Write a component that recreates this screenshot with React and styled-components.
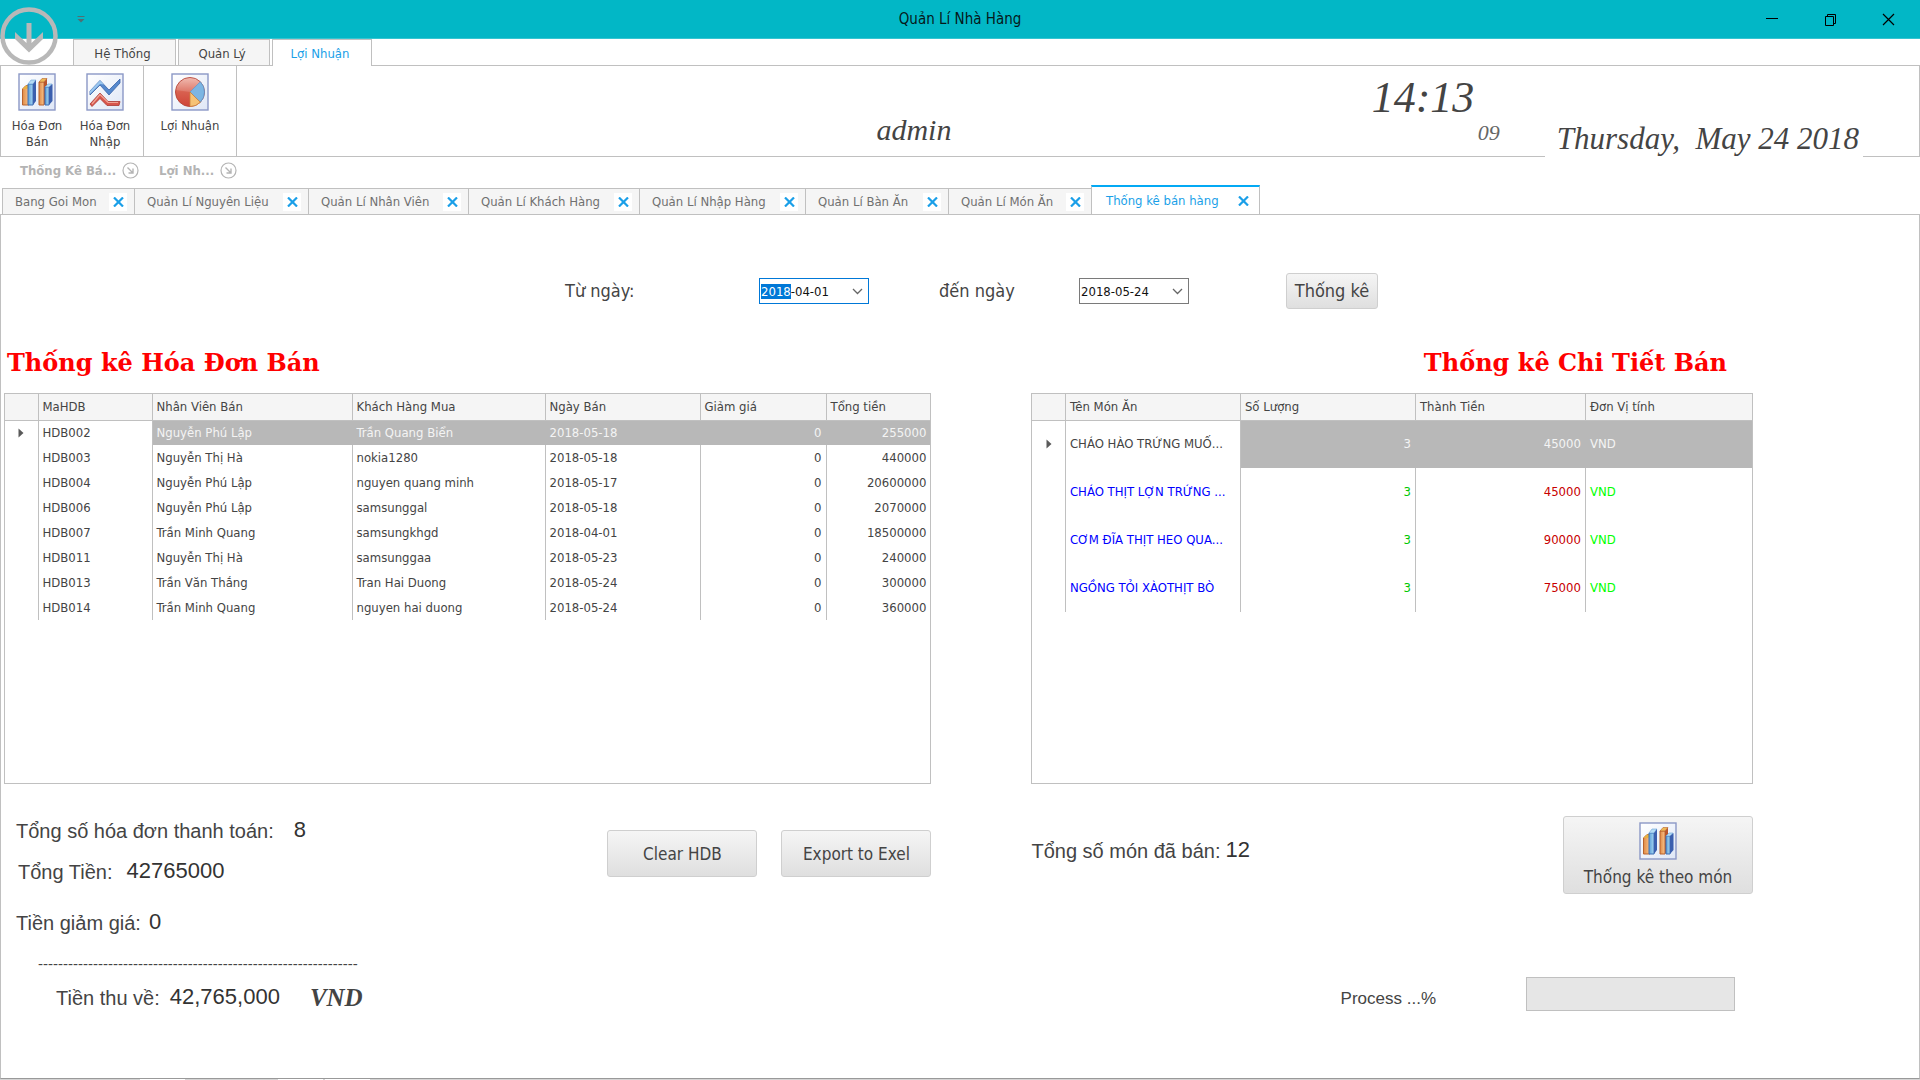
import React, { useEffect, useRef, useState } from "react";
import styled, { createGlobalStyle, css } from "styled-components";

const line = "#c0c0c0";
const ink = "#444444";
const blue = "#1a9fe8";
const ui = `"DejaVu Sans Condensed", "DejaVu Sans", sans-serif`;
const arial = `"Liberation Sans", Arial, sans-serif`;
const script = `"Liberation Serif", "Times New Roman", serif`;

const Global = createGlobalStyle`
  *, *::before, *::after { box-sizing: border-box; }
  body { margin: 0; background: #fff; color: ${ink}; font-family: ${ui}; font-size: 13px; line-height: 16px; }
  button, input { font: inherit; color: inherit; }
  button { cursor: pointer; padding: 0; }
  h2, p, dl, dt, dd { margin: 0; }
`;

const Window = styled.div`
  position: relative;
  display: flex;
  flex-direction: column;
  min-height: 100vh;
`;

/* ---------- title bar ---------- */
const TitleBar = styled.header`
  display: grid;
  grid-template-columns: 1fr auto 1fr;
  align-items: center;
  height: 39px;
  background: #02b7c6;
  color: #0b2a2e;
  border-bottom: 1px solid #35c5d1;
`;
const QuickAccess = styled.button`
  width: 16px;
  height: 16px;
  margin-left: 73px;
  border: 0;
  background: none;
  display: grid;
  place-items: center;
`;
const Title = styled.span`
  font-size: 15px;
  line-height: 20px;
  color: #06181a;
`;
const Controls = styled.div`
  display: flex;
  justify-content: flex-end;
  padding-right: 3px;
`;
const ControlButton = styled.button`
  width: 58px;
  height: 36px;
  border: 0;
  background: none;
  display: grid;
  place-items: center;
`;
const AppButton = styled.button`
  position: absolute;
  left: 0;
  top: 7px;
  width: 58px;
  height: 58px;
  border: 0;
  background: none;
`;

/* ---------- ribbon ---------- */
const RibbonTabs = styled.nav`
  display: flex;
  gap: 2px;
  height: 26px;
  padding-left: 73px;
`;
const RibbonTab = styled.button`
  width: ${(p) => p.$w}px;
  height: 26px;
  padding: 2px 4px 0 0;
  border: 1px solid ${line};
  border-bottom: 0;
  background: ${(p) => (p.$active ? "#fff" : "#f5f5f5")};
  color: ${(p) => (p.$active ? blue : ink)};
  ${(p) => p.$active && css`height: 27px; z-index: 1;`}
`;
const Ribbon = styled.section`
  display: flex;
  height: 92px;
  border: 1px solid ${line};
`;
const RibbonGroup = styled.div`
  display: flex;
  width: ${(p) => p.$w}px;
  padding: 7px 7px 0 7px;
  gap: 10px;
  border-right: 1px solid ${line};
  justify-content: ${(p) => (p.$center ? "center" : "flex-start")};
`;
const RibbonButton = styled.button`
  display: flex;
  flex-direction: column;
  align-items: center;
  align-self: flex-start;
  gap: 7px;
  width: ${(p) => p.$w || 58}px;
  border: 0;
  background: none;
  line-height: 16px;
  white-space: pre;
`;
const Info = styled.div`
  flex: 1;
  display: grid;
  grid-template-columns: 639fr 495fr 173fr 374fr;
  font-family: ${script};
  font-style: italic;
`;
const User = styled.p`
  grid-column: 2;
  padding-top: 47px;
  font-size: 30px;
  line-height: 34px;
`;
const Clock = styled.p`
  display: flex;
  flex-direction: column;
  width: 128px;
  padding-top: 10px;
  font-size: 44px;
  line-height: 44px;
`;
const Seconds = styled.span`
  align-self: flex-end;
  font-size: 22px;
  line-height: 26px;
  color: #666;
`;
const Today = styled.p`
  justify-self: start;
  align-self: end;
  padding: 0 4px 10px 12px;
  margin-bottom: -10px;
  background: #fff;
  font-size: 31px;
  line-height: 34px;
  white-space: pre;
`;
const Captions = styled.div`
  display: flex;
  align-items: center;
  height: 27px;
  padding-left: 20px;
  gap: 20px;
  color: #b4b4b4;
  font-weight: bold;
`;
const Caption = styled.div`
  display: flex;
  align-items: center;
  gap: 6px;
`;
const Launcher = styled.button`
  width: 17px;
  height: 17px;
  border: 0;
  background: none;
`;

/* ---------- document tabs ---------- */
const DocTabs = styled.nav`
  display: flex;
  align-items: flex-end;
  height: 31px;
  padding-left: 2px;
  margin-bottom: -1px;
`;
const DocTab = styled.div`
  display: flex;
  align-items: center;
  justify-content: space-between;
  width: ${(p) => p.$w}px;
  height: 27px;
  padding: 0 7px 0 12px;
  border: 1px solid ${line};
  border-right-width: 0;
  background: #f5f5f5;
  color: #707070;
  ${(p) =>
    p.$active &&
    css`
      height: 30px;
      border-top: 2px solid #03a9f4;
      border-right-width: 1px;
      border-bottom: 0;
      background: #fff;
      color: ${blue};
      padding-left: 14px;
    `}
`;
const DocLink = styled.button`
  border: 0;
  background: none;
`;
const DocClose = styled.button`
  width: 18px;
  height: 18px;
  border: 0;
  background: #fff;
  display: grid;
  place-items: center;
`;

/* ---------- page ---------- */
const Page = styled.main`
  flex: 1;
  border: 1px solid ${line};
  border-bottom-color: #999;
  padding: 58px 166px 0 3px;
`;
const Filter = styled.form`
  display: flex;
  align-items: center;
  height: 36px;
  padding-left: 561px;
  font-size: 18px;
`;
const FilterLabel = styled.label`
  width: ${(p) => p.$w}px;
`;
const DateBox = styled.div`
  display: flex;
  align-items: center;
  width: 110px;
  height: 26px;
  margin-right: ${(p) => p.$after}px;
  padding: 0 4px 0 1px;
  border: 1px solid ${(p) => (p.$focus ? "#0078d7" : "#7a7a7a")};
  font-size: 13px;
  color: #111;
`;
const DateInput = styled.input`
  flex: 1;
  min-width: 0;
  height: 18px;
  padding: 0;
  border: 0;
  outline: 0;
  background: none;
  caret-color: transparent;
  &::selection { background: #0078d7; color: #fff; }
`;
const DateDrop = styled.button`
  width: 14px;
  height: 20px;
  border: 0;
  background: none;
`;
const Button = styled.button`
  display: flex;
  flex-direction: column;
  align-items: center;
  justify-content: center;
  gap: 6px;
  width: ${(p) => p.$w}px;
  height: ${(p) => p.$h}px;
  border: 1px solid #cfcfcf;
  border-radius: 3px;
  background: linear-gradient(#f5f5f5, #dfdfdf);
  font-size: ${(p) => p.$size || 17}px;
  line-height: 22px;
`;

const Columns = styled.div`
  display: grid;
  grid-template-columns: 928fr 722fr;
  column-gap: 100px;
  margin-top: 33px;
`;
const Heading = styled.h2`
  height: 51px;
  padding: 4px 26px 0 3px;
  color: #ff0000;
  font: bold 24px/34px "DejaVu Serif", serif;
  text-align: ${(p) => p.$align || "left"};
  white-space: nowrap;
`;
const GridBox = styled.div`
  height: 391px;
  border: 1px solid ${line};
`;
const Table = styled.table`
  width: 100%;
  table-layout: fixed;
  border-collapse: collapse;
`;
const Col = styled.col`
  width: ${(p) => (p.$w ? p.$w + "px" : "auto")};
`;
const Th = styled.th`
  height: 26px;
  padding: 0 4px;
  text-align: left;
  font-weight: normal;
  background: #f5f5f5;
  border-right: 1px solid ${line};
  border-bottom: 1px solid ${line};
  &:last-child { border-right: 0; }
`;
const Td = styled.td`
  height: ${(p) => p.$h}px;
  padding: 0 4px;
  text-align: ${(p) => (p.$right ? "right" : "left")};
  color: ${(p) => p.$color || ink};
  border-right: 1px solid ${line};
  overflow: hidden;
  text-overflow: ellipsis;
  white-space: nowrap;
  &:last-child { border-right: 0; }
  ${(p) =>
    p.$selected &&
    css`
      background: #b8b8b8;
      border-right-color: #b8b8b8;
      color: #f4f4f4;
    `}
`;
const Mark = styled.td`
  text-align: center;
  padding: 0;
  line-height: 0;
  border-right: 1px solid ${line};
`;

const Footer = styled.section`
  display: flex;
  justify-content: space-between;
  align-items: flex-start;
  padding-top: 32px;
`;
const Totals = styled.dl`
  font-family: ${arial};
`;
const Total = styled.div`
  display: flex;
  align-items: flex-start;
  height: ${(p) => p.$h}px;
  padding-left: ${(p) => p.$indent}px;
  gap: ${(p) => p.$gap}px;
`;
const TotalLabel = styled.dt`
  font-size: 20px;
  line-height: 30px;
`;
const TotalValue = styled.dd`
  font-size: 22px;
  line-height: 28px;
  color: #333;
`;
const Currency = styled.dd`
  padding-left: 20px;
  font: italic bold 25px/30px ${script};
`;
const Dashes = styled.div`
  height: 27px;
  padding-left: 34px;
  font-size: 15px;
  line-height: 16px;
`;
const Actions = styled.div`
  display: flex;
  gap: 24px;
  padding-top: 14px;
`;
const Sold = styled.dl`
  padding-top: 20px;
  font-family: ${arial};
`;
const Progress = styled.div`
  display: flex;
  justify-content: flex-end;
  align-items: flex-start;
  padding: 83px 18px 0 0;
  font: 17px/40px ${arial};
`;
const ProgressLabel = styled.label`
  padding-right: 90px;
  padding-top: 2px;
`;
const Bar = styled.progress`
  appearance: none;
  width: 209px;
  height: 34px;
  border: 1px solid ${line};
  background: #e6e6e6;
  &::-webkit-progress-bar { background: #e6e6e6; }
  &::-webkit-progress-value { background: #02b7c6; }
`;
const StatusEdge = styled.footer`
  display: flex;
  gap: 2px;
  height: 1px;
  padding-left: 140px;
  background: #d4d4d4;
`;
const StatusCell = styled.span`
  width: 45px;
  margin-right: ${(p) => p.$after || 0}px;
  background: #fff;
`;

/* ---------- drawings ---------- */
const Frame = ({ id, children }) => (
  <svg width="38" height="38" viewBox="0 0 38 38" aria-hidden="true">
    <defs>
      <linearGradient id={id + "bg"} x1="0" y1="0" x2="1" y2="1">
        <stop offset="0" stopColor="#fff" />
        <stop offset="1" stopColor="#dfe7f6" />
      </linearGradient>
      <linearGradient id={id + "o"}>
        <stop offset="0" stopColor="#e08a45" />
        <stop offset="1" stopColor="#f9c48c" />
      </linearGradient>
      <linearGradient id={id + "b"}>
        <stop offset="0" stopColor="#5a9fd8" />
        <stop offset="1" stopColor="#a9d6f2" />
      </linearGradient>
    </defs>
    <rect x="1" y="1" width="36" height="36" fill={`url(#${id}bg)`} stroke="#8b98c6" strokeWidth="1.4" />
    {children}
  </svg>
);
const BarsIcon = ({ id }) => (
  <Frame id={id}>
    <path d="M4.500 16L8 12.500H11V32H4.500Z" fill={`url(#${id}o)`} stroke="#b9632c" />
    <path d="M4.500 16L8 12.500H12L9 16Z" fill="#e9b13f" />
    <path d="M10 11H15V32H10Z" fill={`url(#${id}b)`} stroke="#3d6fb4" />
    <path d="M10 11L13 7H18L15 11Z" fill="#b5dcf5" stroke="#6aa2d6" strokeWidth=".6" />
    <path d="M15 11L18 7V28L15 32Z" fill="#3b5fae" />
    <path d="M21 9H26V32H21Z" fill={`url(#${id}o)`} stroke="#b9632c" />
    <path d="M21 9L24 5.500H29L26 9Z" fill="#ecb956" stroke="#b9632c" strokeWidth=".6" />
    <path d="M26 9L29 5.500V28L26 32Z" fill="#b9562c" />
    <path d="M27 14H31V32H27Z" fill={`url(#${id}b)`} stroke="#3d6fb4" />
    <path d="M27 14L30 11H34L31 14Z" fill="#b5dcf5" stroke="#6aa2d6" strokeWidth=".6" />
    <path d="M31 14L34.500 11V28L31 32Z" fill="#3b5fae" />
  </Frame>
);
const LinesIcon = () => (
  <Frame id="ln">
    <path d="M4 18L14 7.500L23 17L34 6V10L23 22L14 12L4 22Z" fill="#5589cd" stroke="#3a62a8" strokeWidth=".8" />
    <path d="M4 18L14 7.500L18 11.500L14 11L4 21Z" fill="#9ac6ee" />
    <path d="M4 31L14 20L22 28.500H34L33 32.500H21L14 25.500L6 33.500Z" fill="#d8564c" stroke="#a93834" strokeWidth=".8" />
    <path d="M6 31L14 21.500L22 29.500H32" fill="none" stroke="#f0a394" strokeWidth="1.200" />
  </Frame>
);
const PieIcon = () => (
  <Frame id="pi">
    <defs>
      <linearGradient id="pieRed" x1="0" y1="0" x2="0" y2="1">
        <stop offset="0" stopColor="#eeb0a4" />
        <stop offset=".5" stopColor="#d8604f" />
        <stop offset="1" stopColor="#cf4438" />
      </linearGradient>
    </defs>
    <circle cx="19" cy="19" r="14.500" fill="url(#pieRed)" stroke="#b9483c" />
    <path d="M19 19L29.300 8.800A14.500 14.500 0 0 1 29.300 29.200Z" fill="#7cb5e2" stroke="#5d92c8" strokeWidth=".8" />
    <path d="M19 19L29.300 29.200A14.500 14.500 0 0 1 19 33.500Z" fill="#f6c275" stroke="#c9803c" strokeWidth=".8" />
    <path d="M19 4.500A14.500 14.500 0 0 1 29.300 8.800L19 19L5 17A14.500 14.500 0 0 1 19 4.500Z" fill="#fff" opacity=".14" />
  </Frame>
);
const Cross = () => (
  <svg width="11" height="10" viewBox="0 0 11 10" aria-hidden="true">
    <path d="M1 0.500L10 9.500M10 0.500L1 9.500" stroke={blue} strokeWidth="2.200" />
  </svg>
);
const LaunchIcon = () => (
  <svg width="17" height="17" viewBox="0 0 17 17" fill="none" stroke="#b4b4b4" aria-hidden="true">
    <circle cx="8.500" cy="8.500" r="7.500" strokeWidth="1.200" />
    <path d="M5.500 5.500L11 11M11 6.500V11H6.500" strokeWidth="1.400" />
  </svg>
);
const Arrow = () => (
  <svg width="6" height="10" viewBox="0 0 6 10" aria-hidden="true">
    <path d="M0.500 0.500L5.500 5L0.500 9.500Z" fill="#5a5a5a" />
  </svg>
);
const Chevron = () => (
  <svg width="11" height="7" viewBox="0 0 11 7" aria-hidden="true">
    <path d="M1 1L5.500 5.500L10 1" fill="none" stroke="#666" strokeWidth="1.300" />
  </svg>
);

/* ---------- data ---------- */
const docTabs = [
  ["Bang Goi Mon", 132],
  ["Quản Lí Nguyên Liệu", 174],
  ["Quản Lí Nhân Viên", 160],
  ["Quản Lí Khách Hàng", 171],
  ["Quản Lí Nhập Hàng", 166],
  ["Quản Lí Bàn Ăn", 143],
  ["Quản Lí Món Ăn", 143],
  ["Thống kê bán hàng", 169],
];
const bills = [
  ["HDB002", "Nguyễn Phú Lập", "Trần Quang Biển", "2018-05-18", "0", "255000"],
  ["HDB003", "Nguyễn Thị Hà", "nokia1280", "2018-05-18", "0", "440000"],
  ["HDB004", "Nguyễn Phú Lập", "nguyen quang minh", "2018-05-17", "0", "20600000"],
  ["HDB006", "Nguyễn Phú Lập", "samsunggal", "2018-05-18", "0", "2070000"],
  ["HDB007", "Trần Minh Quang", "samsungkhgd", "2018-04-01", "0", "18500000"],
  ["HDB011", "Nguyễn Thị Hà", "samsunggaa", "2018-05-23", "0", "240000"],
  ["HDB013", "Trần Văn Thắng", "Tran Hai Duong", "2018-05-24", "0", "300000"],
  ["HDB014", "Trần Minh Quang", "nguyen hai duong", "2018-05-24", "0", "360000"],
];
const dishes = [
  ["CHÁO HÀO TRỨNG MUỐ...", "3", "45000", "VND"],
  ["CHÁO THỊT LỢN TRỨNG ...", "3", "45000", "VND"],
  ["CƠM ĐĨA THỊT HEO QUA...", "3", "90000", "VND"],
  ["NGỒNG TỎI XÀOTHỊT BÒ", "3", "75000", "VND"],
];

function DataGrid({ heads, widths, rows, rowHeight, rightCols, colors = [] }) {
  return (
    <GridBox>
      <Table>
        <colgroup>
          {widths.map((w, i) => (
            <Col key={i} $w={w} />
          ))}
        </colgroup>
        <thead>
          <tr>
            <Th />
            {heads.map((h) => (
              <Th key={h}>{h}</Th>
            ))}
          </tr>
        </thead>
        <tbody>
          {rows.map((row, r) => (
            <tr key={r}>
              <Mark>{r === 0 && <Arrow />}</Mark>
              {row.map((cell, c) => (
                <Td
                  key={c}
                  $h={rowHeight}
                  $right={rightCols.includes(c)}
                  $selected={r === 0 && c > 0}
                  $color={r > 0 ? colors[c] : undefined}
                >
                  {cell}
                </Td>
              ))}
            </tr>
          ))}
        </tbody>
      </Table>
    </GridBox>
  );
}

export default function App() {
  const fromRef = useRef(null);
  const [from, setFrom] = useState("2018-04-01");
  const [to, setTo] = useState("2018-05-24");
  useEffect(() => {
    fromRef.current.focus();
    fromRef.current.setSelectionRange(0, 4);
  }, []);

  return (
    <Window>
      <Global />
      <TitleBar>
        <QuickAccess aria-label="Menu">
          <svg width="8" height="7" viewBox="0 0 8 7" aria-hidden="true">
            <path d="M0.500 0.500H7.500" stroke="#4f6f73" />
            <path d="M0.500 3H7.500L4 6.500Z" fill="#4f6f73" />
          </svg>
        </QuickAccess>
        <Title>Quản Lí Nhà Hàng</Title>
        <Controls>
          <ControlButton aria-label="Minimize">
            <svg width="12" height="12" viewBox="0 0 12 12" stroke="#000" aria-hidden="true">
              <path d="M0 5.500H12" />
            </svg>
          </ControlButton>
          <ControlButton aria-label="Restore">
            <svg width="13" height="13" viewBox="0 0 13 13" fill="none" stroke="#000" aria-hidden="true">
              <path d="M1.500 3.500H9.500V12.500H1.500ZM3.500 3.500V1.500H11.500V10.500H9.500" />
            </svg>
          </ControlButton>
          <ControlButton aria-label="Close">
            <svg width="13" height="13" viewBox="0 0 13 13" stroke="#000" strokeWidth="1.200" aria-hidden="true">
              <path d="M1 1L12 12M12 1L1 12" />
            </svg>
          </ControlButton>
        </Controls>
      </TitleBar>
      <AppButton aria-label="App">
        <svg width="58" height="58" viewBox="0 0 58 58" aria-hidden="true">
          <circle cx="29" cy="29" r="26.500" fill="none" stroke="#b8b8b8" strokeWidth="4.500" />
          <path
            d="M26.500 16H31.500V36L43 25V32L29 45.500L15 32V25L26.500 36Z"
            fill="#b8b8b8"
          />
        </svg>
      </AppButton>

      <RibbonTabs>
        <RibbonTab $w={103}>Hệ Thống</RibbonTab>
        <RibbonTab $w={92}>Quản Lý</RibbonTab>
        <RibbonTab $w={100} $active>
          Lợi Nhuận
        </RibbonTab>
      </RibbonTabs>
      <Ribbon>
        <RibbonGroup $w={143}>
          <RibbonButton>
            <BarsIcon id="b1" />
            <span>{"Hóa Đơn\nBán"}</span>
          </RibbonButton>
          <RibbonButton>
            <LinesIcon />
            <span>{"Hóa Đơn\nNhập"}</span>
          </RibbonButton>
        </RibbonGroup>
        <RibbonGroup $w={93} $center>
          <RibbonButton $w={80}>
            <PieIcon />
            <span>Lợi Nhuận</span>
          </RibbonButton>
        </RibbonGroup>
        <Info>
          <User>admin</User>
          <Clock>
            14:13
            <Seconds>09</Seconds>
          </Clock>
          <Today>{"Thursday,  May 24 2018"}</Today>
        </Info>
      </Ribbon>
      <Captions>
        <Caption>
          Thống Kê Bá...
          <Launcher aria-label="Thống Kê Bá...">
            <LaunchIcon />
          </Launcher>
        </Caption>
        <Caption>
          Lợi Nh...
          <Launcher aria-label="Lợi Nh...">
            <LaunchIcon />
          </Launcher>
        </Caption>
      </Captions>

      <DocTabs>
        {docTabs.map(([name, w], i) => (
          <DocTab key={name} $w={w} $active={i === docTabs.length - 1}>
            <DocLink>{name}</DocLink>
            <DocClose aria-label={name}>
              <Cross />
            </DocClose>
          </DocTab>
        ))}
      </DocTabs>

      <Page>
        <Filter onSubmit={(e) => e.preventDefault()}>
          <FilterLabel htmlFor="from" $w={194}>
            Từ ngày:
          </FilterLabel>
          <DateBox $focus $after={70}>
            <DateInput id="from" ref={fromRef} value={from} onChange={(e) => setFrom(e.target.value)} />
            <DateDrop type="button" aria-label="Từ ngày">
              <Chevron />
            </DateDrop>
          </DateBox>
          <FilterLabel htmlFor="to" $w={140}>
            đến ngày
          </FilterLabel>
          <DateBox $after={97}>
            <DateInput id="to" value={to} onChange={(e) => setTo(e.target.value)} />
            <DateDrop type="button" aria-label="đến ngày">
              <Chevron />
            </DateDrop>
          </DateBox>
          <Button $w={92} $h={36} $size={18}>
            Thống kê
          </Button>
        </Filter>

        <Columns>
          <section>
            <Heading>Thống kê Hóa Đơn Bán</Heading>
            <DataGrid
              heads={["MaHDB", "Nhân Viên Bán", "Khách Hàng Mua", "Ngày Bán", "Giảm giá", "Tổng tiền"]}
              widths={[33, 114, 200, 193, 155, 126, null]}
              rows={bills}
              rowHeight={25}
              rightCols={[4, 5]}
            />
            <Footer>
              <Totals>
                <Total $h={41} $indent={12} $gap={20}>
                  <TotalLabel>Tổng số hóa đơn thanh toán:</TotalLabel>
                  <TotalValue>8</TotalValue>
                </Total>
                <Total $h={51} $indent={14} $gap={14}>
                  <TotalLabel>Tổng Tiền:</TotalLabel>
                  <TotalValue>42765000</TotalValue>
                </Total>
                <Total $h={48} $indent={12} $gap={8}>
                  <TotalLabel>Tiền giảm giá:</TotalLabel>
                  <TotalValue>0</TotalValue>
                </Total>
                <Dashes>{"-".repeat(64)}</Dashes>
                <Total $h={32} $indent={52} $gap={10}>
                  <TotalLabel>Tiền thu về:</TotalLabel>
                  <TotalValue>42,765,000</TotalValue>
                  <Currency>VND</Currency>
                </Total>
              </Totals>
              <Actions>
                <Button $w={150} $h={47}>
                  Clear HDB
                </Button>
                <Button $w={150} $h={47}>
                  Export to Exel
                </Button>
              </Actions>
            </Footer>
          </section>

          <section>
            <Heading $align="right">Thống kê Chi Tiết Bán</Heading>
            <DataGrid
              heads={["Tên Món Ăn", "Số Lượng", "Thành Tiền", "Đơn Vị tính"]}
              widths={[33, 175, 175, 170, null]}
              rows={dishes}
              rowHeight={48}
              rightCols={[1, 2]}
              colors={["#0000ff", "#00c800", "#c80000", "#00ff00"]}
            />
            <Footer>
              <Sold>
                <Total $gap={5} $indent={0} $h={32}>
                  <TotalLabel>Tổng số món đã bán:</TotalLabel>
                  <TotalValue>12</TotalValue>
                </Total>
              </Sold>
              <Button $w={190} $h={78}>
                <BarsIcon id="b2" />
                Thống kê theo món
              </Button>
            </Footer>
            <Progress>
              <ProgressLabel htmlFor="process">Process ...%</ProgressLabel>
              <Bar id="process" value={0} max={100} />
            </Progress>
          </section>
        </Columns>
      </Page>
      <StatusEdge>
        <StatusCell $after={91} />
        <StatusCell />
        <StatusCell />
      </StatusEdge>
    </Window>
  );
}
